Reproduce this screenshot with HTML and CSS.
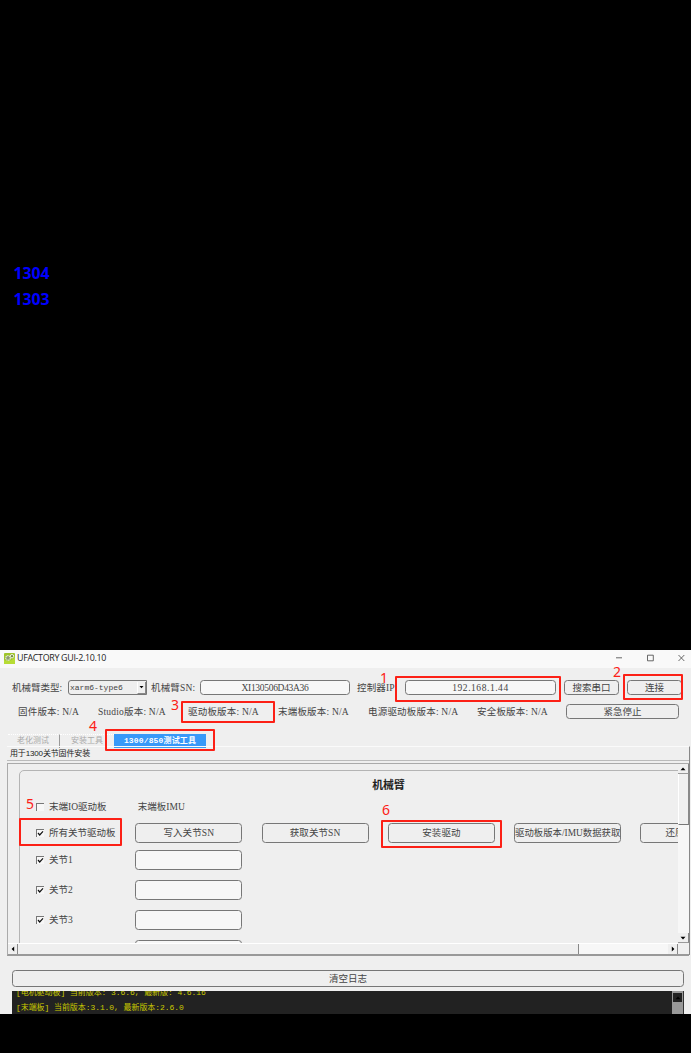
FILE: index.html
```
<!DOCTYPE html>
<html lang="zh-CN">
<head>
<meta charset="utf-8">
<title>UFACTORY GUI-2.10.10</title>
<link rel="stylesheet" href="styles.css">
</head>
<body>
<div class="joints"><div>1304</div><div>1303</div></div>
<main class="window">
  <header class="titlebar">
    <svg class="logo" width="11" height="11" viewBox="0 0 11 11"><rect width="11" height="11" rx="1" fill="#9fc52b"/><path d="M0 7Q6 10 11 4V11H0Z" fill="#b7dc35"/><circle cx="4" cy="5" r="2.3" fill="#8d9c70" stroke="#e3ead2" stroke-width="1.2" stroke-dasharray="1.3 .5"/><circle cx="8" cy="3.2" r="1.7" fill="#738b45" stroke="#edf3dd"/></svg>
    <span class="apptitle">UFACTORY GUI-2.10.10</span>
    <svg class="controls" width="72" height="12" viewBox="0 0 72 12" fill="none" stroke="#444" stroke-width=".8"><path d="M3 5.8H9M34.5 3.2h5.8v5.6h-5.8zM65.5 3l5.8 6M71.3 3l-5.8 6"/></svg>
  </header>
  <section class="connect">
    <span>机械臂类型:</span>
    <div class="select"><span>xarm6-type6</span><i class="drop"><svg width="5" height="4" viewBox="0 0 5 4"><path d="M.5 1h4L2.5 3.3z"/></svg></i></div>
    <span class="sn">机械臂SN:</span>
    <div class="field serial">XI130506D43A36</div>
    <span class="ip">控制器IP:</span>
    <div class="field address">192.168.1.44</div>
    <button class="btn search">搜索串口</button>
    <button class="btn link">连接</button>
  </section>
  <section class="versions">
    <span>固件版本: N/A</span><span>Studio版本: N/A</span><span>驱动板版本: N/A</span><span>末端板版本: N/A</span><span>电源驱动板版本: N/A</span><span>安全板版本: N/A</span>
    <button class="btn">紧急停止</button>
  </section>
  <nav class="tabs"><span class="tab aging">老化测试</span><span class="tab install">安装工具</span><span class="tab active">1300/850测试工具</span></nav>
  <section class="pane">
    <div class="note">用于1300关节固件安装</div>
    <div class="scroller">
      <div class="view">
        <div class="group">
          <h1>机械臂</h1>
          <div class="row io"><label><i class="check"></i>末端IO驱动板</label><span class="imu">末端板IMU</span></div>
          <div class="row all"><label><i class="check"><svg width="7" height="7" viewBox="0 0 7 7"><path d="M1 3l1.7 2L6 1.3"/></svg></i>所有关节驱动板</label><button class="btn">写入关节SN</button><button class="btn">获取关节SN</button><button class="btn">安装驱动</button><button class="btn wide">驱动板版本/IMU数据获取</button><button class="btn restore">还原</button></div>
          <div class="row joint"><label><i class="check"><svg width="7" height="7" viewBox="0 0 7 7"><path d="M1 3l1.7 2L6 1.3"/></svg></i>关节1</label><div class="field"></div></div>
          <div class="row joint"><label><i class="check"><svg width="7" height="7" viewBox="0 0 7 7"><path d="M1 3l1.7 2L6 1.3"/></svg></i>关节2</label><div class="field"></div></div>
          <div class="row joint"><label><i class="check"><svg width="7" height="7" viewBox="0 0 7 7"><path d="M1 3l1.7 2L6 1.3"/></svg></i>关节3</label><div class="field"></div></div>
          <div class="row joint"><label></label><div class="field"></div></div>
        </div>
      </div>
      <div class="vbar"><i class="arrow"><svg width="6" height="4" viewBox="0 0 6 4"><path d="M.5 3.2h5L3 .6z"/></svg></i><i class="vthumb"></i><i class="arrow"><svg width="6" height="4" viewBox="0 0 6 4"><path d="M.5.8h5L3 3.4z"/></svg></i></div>
      <div class="hbar"><i class="harrow"><svg width="4" height="6" viewBox="0 0 4 6"><path d="M3.2.5v5L.6 3z"/></svg></i><i class="hthumb"></i><i class="harrow"><svg width="4" height="6" viewBox="0 0 4 6"><path d="M.8.5v5L3.4 3z"/></svg></i></div>
      <div class="corner"></div>
    </div>
  </section>
  <button class="btn clear">清空日志</button>
  <section class="log">
    <div class="lines"><div>[电机驱动板] 当前版本: 3.6.6, 最新版: 4.6.16</div><div>[末端板] 当前版本:3.1.0, 最新版本:2.6.0</div></div>
    <div class="logbar"><i><svg width="6" height="4" viewBox="0 0 6 4"><path d="M.5 3.2h5L3 .6z"/></svg></i></div>
  </section>
</main>
<div class="mark m1"></div><b class="num n1">1</b>
<div class="mark m2"></div><b class="num n2">2</b>
<div class="mark m3"></div><b class="num n3">3</b>
<div class="mark m4"></div><b class="num n4">4</b>
<div class="mark m5"></div><b class="num n5">5</b>
<div class="mark m6"></div><b class="num n6">6</b>
</body>
</html>
```
FILE: styles.css
```
* { box-sizing: border-box; }
html { background: #000; }
body { margin: 0; width: 691px; height: 1053px; position: relative; overflow: hidden; background: #000; color: #444; font: 9.5px/12px "Liberation Serif", "Noto Sans CJK SC", serif; white-space: nowrap; }
i { font-style: normal; }
svg { display: block; flex: none; }

.joints { height: 650px; padding: 260px 0 0 13.5px; color: #00f; font: bold 15.8px/26px "Open Sans", sans-serif; }

.window { height: 364px; background: #efefef; overflow: hidden; display: flex; flex-direction: column; }
.titlebar { flex: none; height: 18px; background: #f9f9f9; display: flex; align-items: center; padding: 0 6px 2px 4px; }
.apptitle { margin-left: 2px; color: #222; font: 8.9px/12px "Open Sans", sans-serif; letter-spacing: -.3px; flex: 1; }

.field, .btn { height: 15px; border: 1px solid #777; border-radius: 3.5px; display: flex; align-items: center; justify-content: center; padding: 0; color: #444; font: inherit; white-space: nowrap; }
.field { background: #f7f7f7; }
.btn { background: #efefef; }

.connect { flex: none; height: 27px; padding: 12px 0 0 12px; display: grid; grid-template-columns: 56px 79px 53px 150px 55px 151px 55px 55px; align-items: center; }
.connect > .sn { padding-left: 4px; letter-spacing: .15px; }
.connect > .ip { padding-left: 7px; letter-spacing: .15px; }
.serial { letter-spacing: -.3px; }
.address { letter-spacing: .55px; }
.connect .search { margin-left: 8px; width: 55px; }
.connect .link { margin-left: 16px; width: 55px; }
.select { height: 15px; border: 1px solid #777; border-radius: 3px 0 0 3px; display: flex; align-items: center; justify-content: space-between; padding-left: 1px; font: 8px/12px "Liberation Mono", monospace; }
.drop { width: 9px; height: 12px; border-left: 1px solid #fff; border-right: 1px solid #888; border-bottom: 1px solid #888; display: flex; align-items: center; justify-content: center; }

.versions { flex: none; height: 25px; padding: 9px 0 1px 18px; display: grid; grid-template-columns: 80px 90px 90px 90px 109px 89px 113px; align-items: center; letter-spacing: .2px; }
.versions .btn { margin-left: 0; }

.tabs { flex: none; height: 26px; padding: 14px 0 0 8px; display: flex; font: 8px/12px "Liberation Serif", "Noto Sans CJK SC", serif; color: #aaa; }
.tab { height: 14px; border-top: 1px dotted #fff; }
.aging { width: 52px; padding-left: 9px; border-right: 1px solid #999; }
.install { width: 54px; padding-left: 11px; }
.active { width: 92px; background: #3899f8; border: 0; color: #fff; text-align: center; font: bold 8px/14px "Liberation Mono", "Noto Sans CJK SC", monospace; letter-spacing: .15px; }

.pane { flex: none; height: 209px; margin: 0 1px 0 7px; border-top: 1px solid #fafafa; border-right: 1px solid #888; }
.note { height: 14px; padding: 1px 0 0 3px; border-bottom: 1px solid #bbb; color: #222; font: 8px/12px "Liberation Sans", "Noto Sans CJK SC", sans-serif; letter-spacing: -.15px; }
.scroller { margin-top: 2px; height: 193px; border: 1px solid #aaa; border-right: 0; border-bottom: 2px solid #999; display: grid; grid-template-columns: 1fr 11px; grid-template-rows: 1fr 11px; }
.view { overflow: hidden; min-height: 0; min-width: 0; }
.group { width: 739px; height: 300px; margin: 6px 0 0 11px; border: 1px solid #b4b4b4; border-radius: 5px; }
.group h1 { margin: 8px 0 0; height: 12px; font: bold 10.8px/13px "Liberation Serif", "Noto Sans CJK SC", serif; color: #222; text-align: center; }
.row { display: grid; grid-template-columns: 99px repeat(5, 107px); column-gap: 19.3px; align-items: center; padding-left: 16px; }
.row label { width: 99px; display: flex; align-items: center; gap: 5px; }
.row .btn, .row .field { height: 20px; margin-left: -19px; width: 107px; letter-spacing: .1px; }
.row .wide { font-size: 9.4px; letter-spacing: 0; }
.row .restore { justify-content: flex-start; padding-left: 24px; }
.imu { margin-left: -16.5px; }
.io { height: 12px; margin-top: 10px; }
.all { height: 20px; margin-top: 10px; }
.joint { height: 20px; margin-top: 10px; }
.all + .joint { margin-top: 7px; }
.check { width: 8px; height: 8px; background: #f7f7f7; border-top: 1px solid #777; border-left: 1px solid #777; flex: none; }
.check path { fill: none; stroke: #111; stroke-width: 1.2; }
.vbar { background: #f7f7f7; display: flex; flex-direction: column; }
.arrow { height: 10px; background: #efefef; border-right: 1px solid #888; border-bottom: 1px solid #999; display: flex; align-items: center; justify-content: center; }
.vthumb { height: 51px; background: #efefef; border-left: 1px solid #fff; border-right: 1px solid #888; border-bottom: 1px solid #777; margin-bottom: auto; }
.hbar { background: #f7f7f7; display: flex; border-top: 1px solid #fff; }
.harrow { width: 10px; background: #efefef; border-right: 1px solid #888; display: flex; align-items: center; justify-content: center; }
.hthumb { width: 561px; background: #efefef; border-right: 1px solid #888; margin-right: auto; }
.corner { background: #efefef; }

.clear { flex: none; width: 672px; height: 17px; margin: 15px 0 0 12px; }
.log { flex: none; width: 672px; height: 23px; margin: 4px 0 0 12px; background: #222; display: flex; justify-content: space-between; overflow: hidden; color: #c9c900; font: 8px/15px "Liberation Mono", "Noto Sans CJK SC", monospace; }
.lines { margin-top: -6px; padding-left: 4px; letter-spacing: -.07px; }
.logbar { width: 12px; background: #999; border-right: 1px solid #333; }
.logbar i { height: 11px; margin-top: 1px; background: #222; border: 1px solid #999; display: flex; align-items: center; justify-content: center; }

.mark { position: absolute; border: 2px solid #fc2016; border-radius: 1px; }
.m1 { left: 395px; top: 676px; width: 166px; height: 26px; }
.m2 { left: 623px; top: 674px; width: 60px; height: 26px; }
.m3 { left: 181px; top: 701px; width: 94px; height: 22px; }
.m4 { left: 105px; top: 729px; width: 110px; height: 22px; }
.m5 { left: 19px; top: 818px; width: 103px; height: 28px; }
.m6 { left: 381px; top: 820px; width: 121px; height: 28px; }
.num { position: absolute; color: #fc2016; font: 14px/16px "Noto Sans", sans-serif; }
.n1 { left: 380px; top: 670px; }
.n2 { left: 613px; top: 664px; }
.n3 { left: 171px; top: 697px; }
.n4 { left: 89px; top: 718px; }
.n5 { left: 26px; top: 796px; }
.n6 { left: 382px; top: 802px; }
```
